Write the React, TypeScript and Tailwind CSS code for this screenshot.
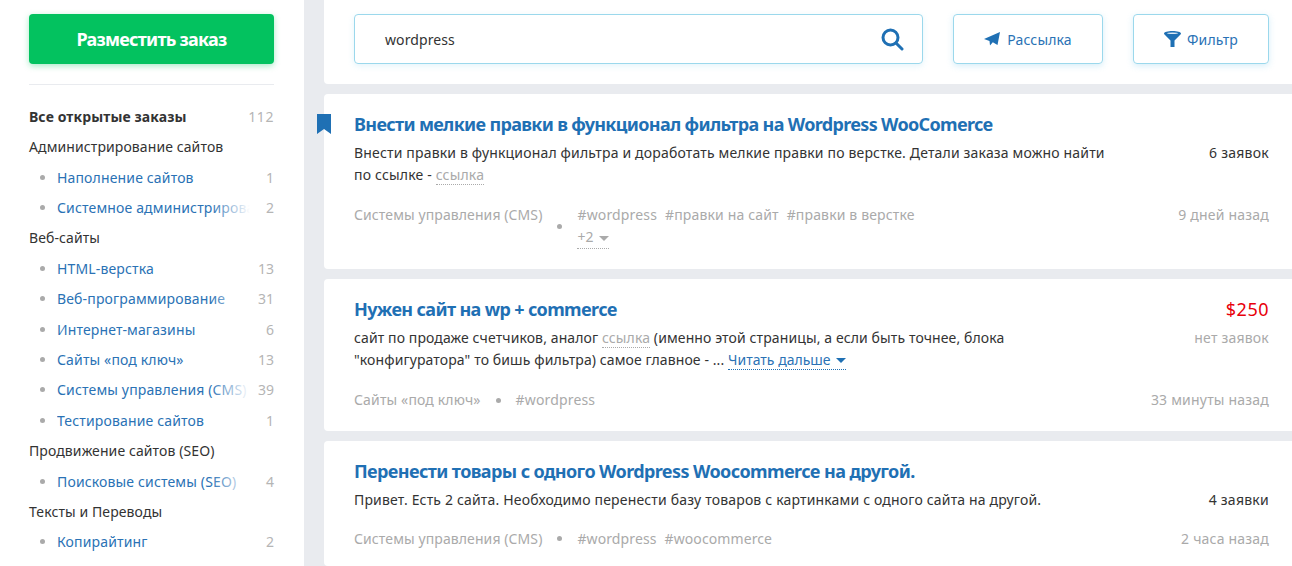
const F = "font-['Noto_Sans',sans-serif]";

const Cat = ({ children, n, bold }: { children: string; n?: number; bold?: boolean }) => (
  <div className={`flex h-[30.4px] items-center justify-between text-[14px] text-[#333] ${bold ? "font-bold" : ""}`}>
    <span className="tracking-[0.1px]">{children}</span>
    {n !== undefined && <span className="text-[#b5b5b5] font-normal tracking-[0.6px]">{n}</span>}
  </div>
);

const Sub = ({ children, n }: { children: string; n: number }) => (
  <div className="flex h-[30.4px] items-center text-[14px]">
    <span className="ml-[11px] mr-[12px] h-[5px] w-[5px] shrink-0 rounded-full bg-[#aaa]" />
    <span className="relative min-w-0 flex-1 overflow-hidden whitespace-nowrap tracking-[0.15px] text-[#2a72b5]">
      {children}
      <span className="absolute inset-y-0 right-0 w-[40px] bg-gradient-to-r from-white/0 to-white" />
    </span>
    <span className="ml-[2px] w-[22px] shrink-0 text-right text-[#b5b5b5]">{n}</span>
  </div>
);

const Dot = () => <span className="mx-[15px] inline-block h-[5px] w-[5px] shrink-0 self-center rounded-full bg-[#aaa]" />;
const Caret = ({ c }: { c: string }) => (
  <svg width="10" height="5" viewBox="0 0 10 5" className="ml-[5px] inline-block align-middle">
    <path d="M0 0h10L5 5z" fill={c} />
  </svg>
);
const Link = ({ children }: { children: string }) => (
  <span className="border-b border-dotted border-[#aaa] text-[#aaa]">{children}</span>
);
const Title = ({ children, className }: { children: string; className: string }) => (
  <h2 className={`text-[18px] leading-[24px] font-bold text-[#1f70b4] ${className}`}>{children}</h2>
);

export default function App() {
  return (
    <div className={`${F} flex h-[566px] w-[1292px] overflow-hidden bg-[#e9ebef]`}>
      <aside className="h-full w-[304px] shrink-0 bg-white pl-[29px] pr-[30px] pt-[14px]">
        <button className="flex h-[50px] w-full items-center justify-center rounded-[4px] bg-[#03c25f] text-[18px] font-bold tracking-[-0.75px] text-white shadow-[0_2px_6px_rgba(3,194,95,0.35)]">
          Разместить заказ
        </button>
        <div className="mt-[20px] mb-[16.200px] h-px bg-[#e9ebef]" />
        <Cat bold n={112}>Все открытые заказы</Cat>
        <Cat>Администрирование сайтов</Cat>
        <Sub n={1}>Наполнение сайтов</Sub>
        <Sub n={2}>Системное администрирование</Sub>
        <Cat>Веб-сайты</Cat>
        <Sub n={13}>HTML-верстка</Sub>
        <Sub n={31}>Веб-программирование</Sub>
        <Sub n={6}>Интернет-магазины</Sub>
        <Sub n={13}>Сайты «под ключ»</Sub>
        <Sub n={39}>Системы управления (CMS)</Sub>
        <Sub n={1}>Тестирование сайтов</Sub>
        <Cat>Продвижение сайтов (SEO)</Cat>
        <Sub n={4}>Поисковые системы (SEO)</Sub>
        <Cat>Тексты и Переводы</Cat>
        <Sub n={2}>Копирайтинг</Sub>
      </aside>

      <main className="ml-[20px] flex min-w-0 flex-1 flex-col gap-[10px]">
        <div className="flex h-[84px] shrink-0 gap-[30px] rounded-bl-[4px] bg-white pl-[30px] pr-[23px] pt-[14px]">
          <div className="flex h-[50px] w-[569px] items-center justify-between rounded-[4px] border border-[#9bd8ec] pl-[30px] pr-[18px] text-[14px] tracking-[0.1px] text-[#333] shadow-[0_2px_6px_rgba(120,200,235,0.2)]">
            <span>wordpress</span>
            <svg width="23" height="23" viewBox="0 0 23 23" fill="none" stroke="#1f70b4" strokeWidth="3" strokeLinecap="round">
              <circle cx="9.500" cy="9.500" r="7.500" />
              <path d="M15 15L21 21" />
            </svg>
          </div>
          <button className="flex h-[50px] w-[150px] items-center justify-center gap-[7px] rounded-[4px] border border-[#9bd8ec] text-[14px] tracking-[0.15px] text-[#2a72b5] shadow-[0_2px_6px_rgba(120,200,235,0.3)]">
            <svg width="16" height="14" viewBox="0 0 16 14"><path d="M16 0L13.500 13 8.800 10.200 6 13.500 5.500 9 0 7z" fill="#1f70b4" /></svg>
            Рассылка
          </button>
          <button className="flex h-[50px] w-[136px] items-center justify-center gap-[6px] rounded-[4px] border border-[#9bd8ec] text-[14px] tracking-[0.15px] text-[#2a72b5] shadow-[0_2px_6px_rgba(120,200,235,0.3)]">
            <svg width="17" height="16" viewBox="0 0 17 16"><path d="M0 2.500C0 1 3.800 0 8.500 0S17 1 17 2.500c0 .6-.4 1.200-1 1.600L10.500 9.500V16h-4V9.500L1 4.100C.4 3.700 0 3.100 0 2.500z" fill="#1f70b4" /><ellipse cx="8.500" cy="2.200" rx="5.500" ry="0.800" fill="#dbe9f5" /></svg>
            Фильтр
          </button>
        </div>

        <article className="relative h-[175px] shrink-0 rounded-l-[4px] bg-white pl-[30px] pr-[23px] pt-[18px]">
          <svg width="14" height="20" viewBox="0 0 14 20" className="absolute left-[-7px] top-[20px]"><path d="M0 0h14v20l-7-5-7 5z" fill="#1f70b4" /></svg>
          <Title className="tracking-[-0.67px]">Внести мелкие правки в функционал фильтра на Wordpress WooComerce</Title>
          <div className="mt-[5.500px] flex justify-between text-[14px] leading-[22px] text-[#333]">
            <p className="w-[752px] tracking-[0.17px]">Внести правки в функционал фильтра и доработать мелкие правки по верстке. Детали заказа можно найти по ссылке - <Link>ссылка</Link></p>
            <span className="tracking-[0.25px]">6 заявок</span>
          </div>
          <div className="mt-[18.500px] flex justify-between text-[14px] leading-[22px] text-[#aaa]">
            <div className="flex tracking-[0.1px]">
              <span>Системы управления (CMS)</span>
              <Dot />
              <div className="w-[360px] tracking-[0.15px]">
                <span className="mr-[8px]">#wordpress</span><span className="mr-[8px]">#правки на сайт</span><span>#правки в верстке</span>
                <div><span className="inline-block border-b border-dotted border-[#aaa]">+2<Caret c="#aaa" /></span></div>
              </div>
            </div>
            <span className="tracking-[0.2px]">9 дней назад</span>
          </div>
        </article>

        <article className="h-[152px] shrink-0 rounded-l-[4px] bg-white pl-[30px] pr-[23px] pt-[18px]">
          <div className="flex items-start justify-between">
            <Title className="tracking-[-0.64px]">Нужен сайт на wp + commerce</Title>
            <span className="text-[18px] leading-[24px] tracking-[0.5px] text-[#e8000b]">$250</span>
          </div>
          <div className="mt-[5.500px] flex justify-between text-[14px] leading-[22px] text-[#333]">
            <p className="w-[752px] tracking-[0.11px]">сайт по продаже счетчиков, аналог <Link>ссылка</Link> (именно этой страницы, а если быть точнее, блока "конфигуратора" то бишь фильтра) самое главное - ... <span className="border-b border-dotted border-[#1f70b4] tracking-[0] text-[#2a72b5]">Читать дальше<Caret c="#1f70b4" /></span></p>
            <span className="tracking-[0.2px] text-[#aaa]">нет заявок</span>
          </div>
          <div className="mt-[18.500px] flex items-center justify-between text-[14px] leading-[22px] text-[#aaa]">
            <div className="flex items-center tracking-[0.15px]"><span>Сайты «под ключ»</span><Dot /><span>#wordpress</span></div>
            <span className="tracking-[0.2px]">33 минуты назад</span>
          </div>
        </article>

        <article className="flex-1 rounded-l-[4px] bg-white pl-[30px] pr-[23px] pt-[18px]">
          <Title className="tracking-[-0.6px]">Перенести товары с одного Wordpress Woocommerce на другой.</Title>
          <div className="mt-[5.500px] flex justify-between text-[14px] leading-[22px] text-[#333]">
            <p className="tracking-[0.17px]">Привет. Есть 2 сайта. Необходимо перенести базу товаров с картинками с одного сайта на другой.</p>
            <span className="tracking-[0.25px]">4 заявки</span>
          </div>
          <div className="mt-[17px] flex items-center justify-between text-[14px] leading-[22px] text-[#aaa]">
            <div className="flex items-center tracking-[0.1px]"><span>Системы управления (CMS)</span><Dot /><span className="mr-[8px]">#wordpress</span><span>#woocommerce</span></div>
            <span className="tracking-[0.2px]">2 часа назад</span>
          </div>
        </article>
      </main>
    </div>
  );
}
